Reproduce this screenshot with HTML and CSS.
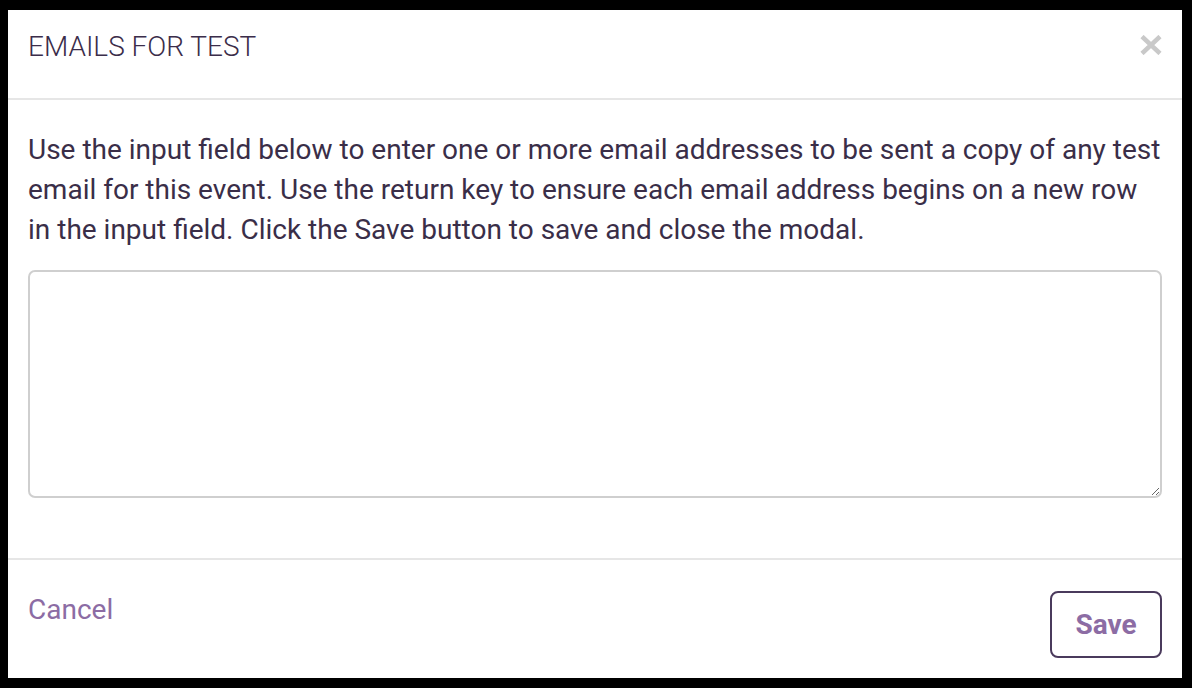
FILE: index.html
```html
<!DOCTYPE html>
<html lang="en">
<head>
  <meta charset="UTF-8" />
  <meta name="viewport" content="width=device-width, initial-scale=1.0" />
  <title>Emails for Test</title>
  <link rel="stylesheet" href="styles.css">
</head>
<body>
  <div class="modal">
    <div class="modal-header">
      <h1>EMAILS FOR TEST</h1>
      <button class="close" type="button" aria-label="Close">
        <svg width="22" height="20" viewBox="0 0 22 20">
          <path d="M2 1.5 L20 18.5 M20 1.5 L2 18.5" stroke="#c9c9c9" stroke-width="4.5" stroke-linecap="butt" />
        </svg>
      </button>
    </div>

    <div class="modal-body">
      <p>Use the input field below to enter one or more email addresses to be sent a copy of any test email for this event. Use the return key to ensure each email address begins on a new row in the input field. Click the Save button to save and close the modal.</p>
      <textarea id="emails" name="emails"></textarea>
    </div>

    <div class="modal-footer">
      <a href="#" class="cancel">Cancel</a>
      <button type="button" class="save">Save</button>
    </div>
  </div>
</body>
</html>
```

FILE: styles.css
```css
html, body {
  height: 100%;
}
body {
  margin: 0;
  background: #000;
  font-family: Roboto, "Liberation Sans", Arial, sans-serif;
  padding: 10px 10px 10px 8px;
  box-sizing: border-box;
}
.modal {
  background: #fff;
  height: 668px;
  display: flex;
  flex-direction: column;
}
.modal-header {
  height: 88px;
  padding: 0 20px;
  border-bottom: 2px solid #e6e6e6;
  display: flex;
  justify-content: space-between;
  align-items: flex-start;
}
.modal-header h1 {
  margin: 20px 0 0;
  font-size: 28px;
  font-weight: 300;
  line-height: 1.2;
  color: #3b2d4a;
}
.close {
  background: none;
  border: none;
  padding: 0;
  margin-top: 25px;
  cursor: pointer;
  line-height: 0;
}
.close svg {
  display: block;
}
.modal-body {
  padding: 30px 20px 60px 20px;
  border-bottom: 2px solid #e6e6e6;
}
.modal-body p {
  margin: 0 0 20px;
  font-size: 28px;
  line-height: 40px;
  color: #3a2e48;
}
textarea {
  display: block;
  width: 100%;
  height: 228px;
  box-sizing: border-box;
  border: 2px solid #cfcfcf;
  border-radius: 7px;
  font-family: inherit;
  font-size: 20px;
  margin: 0;
}
.modal-footer {
  flex: 1;
  padding: 29px 20px 0;
  display: flex;
  justify-content: space-between;
  align-items: flex-start;
}
.cancel {
  font-size: 28px;
  line-height: 42px;
  color: #8c6ca4;
  text-decoration: none;
}
.save {
  margin-top: 2px;
  width: 112px;
  height: 67px;
  padding: 0;
  background: #fff;
  border: 2px solid #4a3a5c;
  border-radius: 8px;
  font-family: inherit;
  font-size: 28px;
  font-weight: 700;
  color: #8c6ca4;
  cursor: pointer;
}
```
